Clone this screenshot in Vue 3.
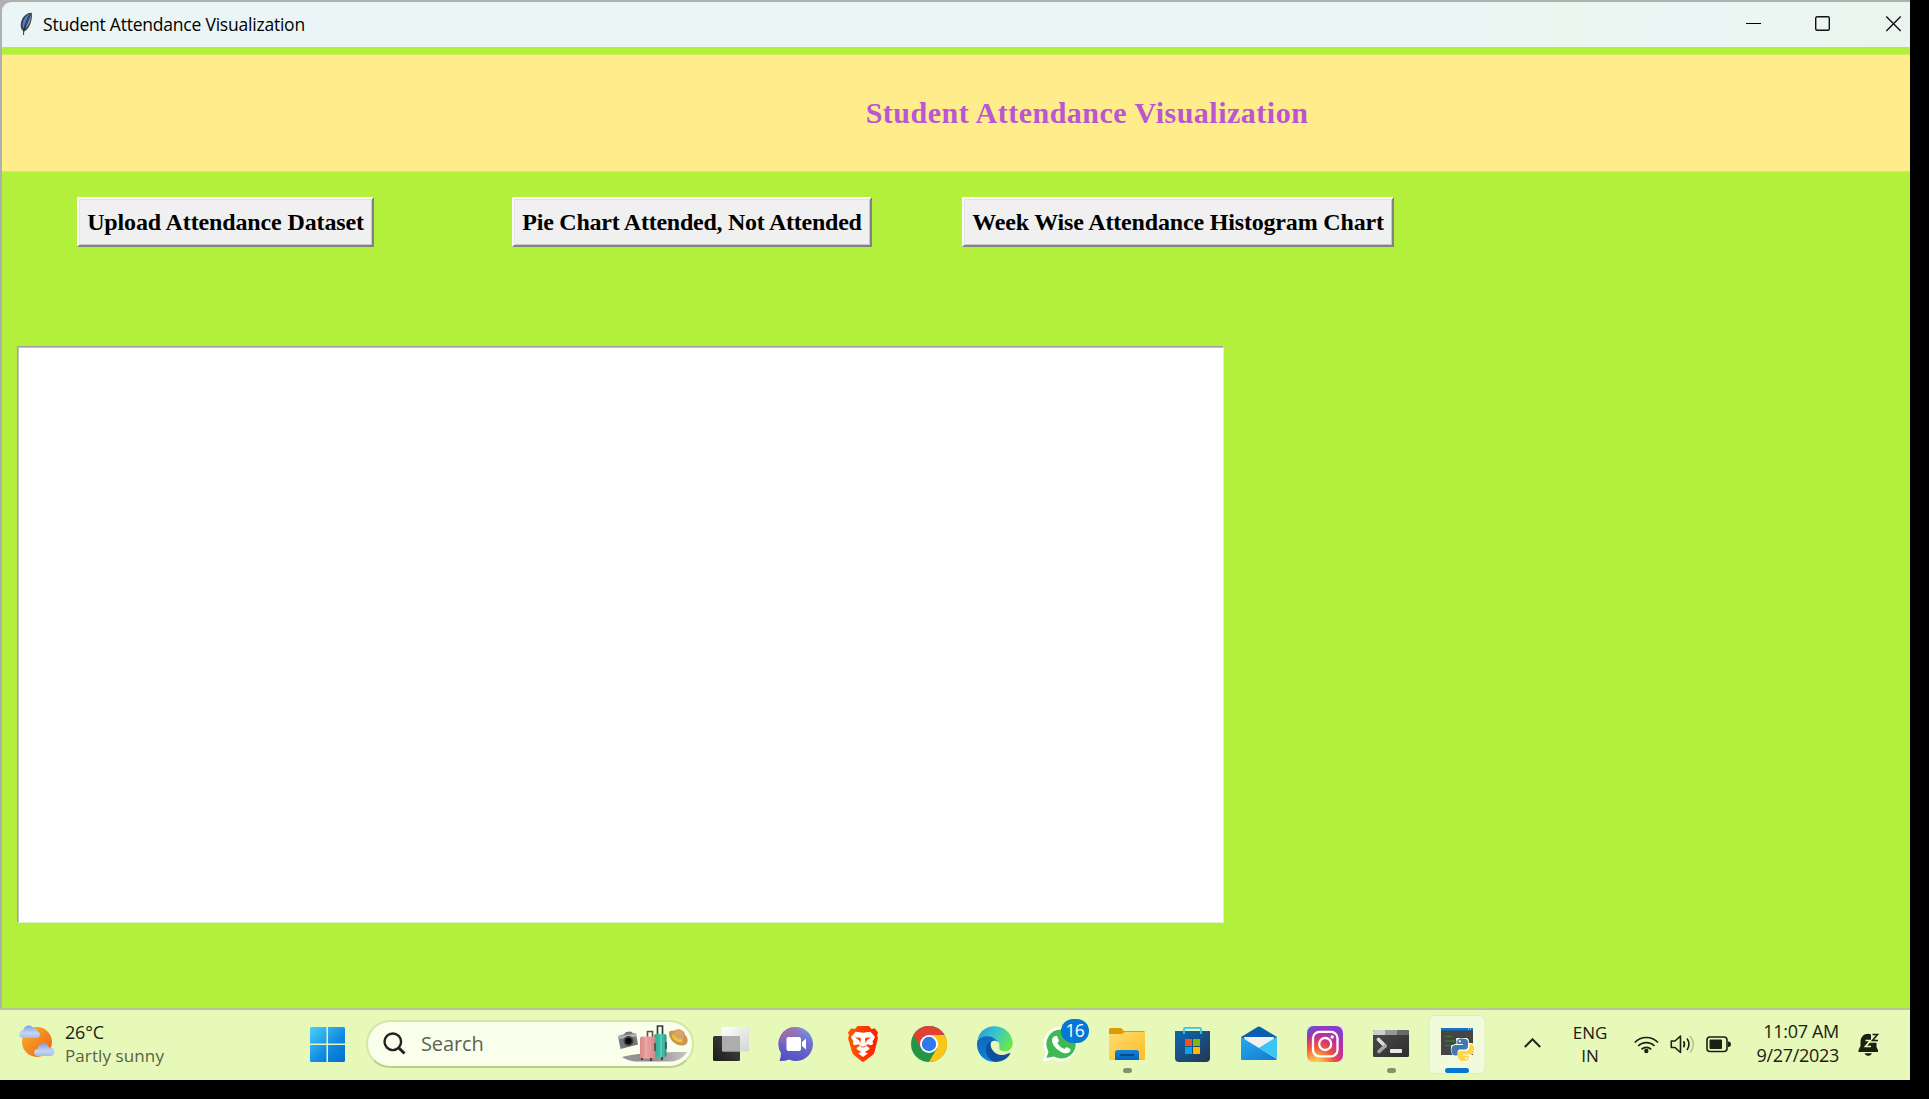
<script setup>
const actions = [
  { label: 'Upload Attendance Dataset', cls: 'upload' },
  { label: 'Pie Chart Attended, Not Attended', cls: 'pie' },
  { label: 'Week Wise Attendance Histogram Chart', cls: 'week' },
]
</script>

<template>
  <div class="screen">
    <div class="desktop">
      <div class="window">
        <header class="titlebar">
          <svg class="feather" width="14" height="24" viewBox="0 0 14 24">
            <path d="M4.6 23.4 L4.2 19 C1 17 .8 11 4 5.6 C6.500 2 10 .5 12.600 .8 C13.600 4 12.600 11 9.500 15.500 C8 17.700 6.500 19 5 19.300z" fill="#39424f" />
            <path d="M4.300 16.500 C2.800 13 4 8 7 4.500 C8.500 2.800 10 2 11 2.200 C9.500 7 7 12 4.300 16.500z" fill="#4585cf" />
            <path d="M11.800 2.500 C12.300 7 10.500 13 6.500 16.500 C8 12 10.500 8 11.800 2.500z" fill="#8d9aa6" />
            <path d="M4.600 23 C4.400 17 7 9 10.500 3" stroke="#1c2b40" stroke-width=".9" fill="none" />
          </svg>
          <span class="caption">Student Attendance Visualization</span>
          <svg class="controls" width="156" height="16" viewBox="0 0 156 16" fill="none" stroke="#111" stroke-width="1.400">
            <path d="M0 7.500H15" stroke-width="1" stroke="#000" />
            <rect x="69.700" y=".7" width="13.600" height="13.600" rx="1.500" />
            <path d="M140.300 .5 L154.700 14.900 M154.700 .5 L140.300 14.900" />
          </svg>
        </header>
        <main class="client">
          <h1 class="banner"><span>Student Attendance Visualization</span></h1>
          <div class="actions">
            <button v-for="a in actions" :key="a.cls" :class="['tk', a.cls]"><span>{{ a.label }}</span></button>
          </div>
          <div class="output"></div>
        </main>
      </div>

      <footer class="taskbar">
        <div class="weather">
          <svg width="36" height="34" viewBox="0 0 36 34">
            <defs>
              <linearGradient id="sun" x1="0" y1="0" x2="1" y2="1"><stop offset="0" stop-color="#f9b52c" /><stop offset="1" stop-color="#ee5f11" /></linearGradient>
              <linearGradient id="cloud" x1="0" y1="0" x2="0" y2="1"><stop offset="0" stop-color="#7e9fe0" /><stop offset=".6" stop-color="#c5d6f4" /><stop offset="1" stop-color="#a3bcea" /></linearGradient>
            </defs>
            <circle cx="18" cy="18" r="15" fill="url(#sun)" />
            <path d="M4 14 C-1 14 -1 6.500 4 6.500 C5 1 12 -.5 15 4.500 C18 4.500 19 6 18.500 7.500 C22 8 21.500 14 17.500 14z" fill="url(#cloud)" />
            <path d="M18.500 32 C14 32 14 25 18.500 25 C20 18 28 17.500 30 23.500 C36.500 22.500 37.500 32 31 32z" fill="url(#cloud)" />
          </svg>
          <div class="lines">
            <span class="temp">26°C</span>
            <span class="cond">Partly sunny</span>
          </div>
        </div>

        <svg class="start" width="35" height="35" viewBox="0 0 35 35">
          <defs>
            <linearGradient id="win" gradientUnits="userSpaceOnUse" x1="0" y1="0" x2="33" y2="35"><stop offset="0" stop-color="#4bd0fb" /><stop offset=".6" stop-color="#118ae0" /><stop offset="1" stop-color="#0070d0" /></linearGradient>
          </defs>
          <path fill="url(#win)" d="M1.500 0H16.500V16.500H0V1.500Q0 0 1.500 0z M18 0H33.500Q35 0 35 1.500V16.500H18z M0 18H16.500V35H1.500Q0 35 0 33.500z M18 18H35V33.500Q35 35 33.500 35H18z" />
        </svg>

        <div class="search">
          <svg width="24" height="24" viewBox="0 0 24 24" fill="none" stroke="#222" stroke-width="2.400">
            <circle cx="9.800" cy="9.800" r="8.300" /><path d="M15.700 15.700 L21.500 21.500" stroke-width="3" />
          </svg>
          <span>Search</span>
          <svg class="travel" width="71" height="38" viewBox="0 0 71 38">
            <defs>
              <linearGradient id="pink" x1="0" y1="0" x2="1" y2="0"><stop offset="0" stop-color="#d98786" /><stop offset=".4" stop-color="#efaaa6" /><stop offset="1" stop-color="#d48482" /></linearGradient>
              <linearGradient id="teal" x1="0" y1="0" x2="1" y2="0"><stop offset="0" stop-color="#2a9f8d" /><stop offset=".6" stop-color="#55d2ba" /><stop offset="1" stop-color="#26917f" /></linearGradient>
              <linearGradient id="ground" x1="0" y1="0" x2="1" y2="0"><stop offset="0" stop-color="#9a9499" /><stop offset=".45" stop-color="#8e898e" /><stop offset="1" stop-color="#cac6c8" /></linearGradient>
            </defs>
            <path d="M5 32 C18 28 50 27 70 27 C66 33 60 36.500 54 36.500 H18 C12 36 8 34 5 32z" fill="url(#ground)" />
            <path d="M1 11 L7 9.300 L9 7 L14 6.500 L16 8.300 L19 8.500 L21 19.500 L3.500 24z" fill="#77777a" />
            <path d="M1 11 L19 8.500 L19.500 11.500 L1.600 14z" fill="#b1b1b2" />
            <circle cx="11.500" cy="16" r="5" fill="#444" /><circle cx="11.500" cy="16" r="3.200" fill="#090909" />
            <path d="M40.500 10V1H45.500V10" fill="none" stroke="#37373c" stroke-width="1.700" />
            <path d="M30.500 12V6.500H35.500V12" fill="none" stroke="#68464a" stroke-width="1.600" />
            <rect x="37" y="9" width="12.500" height="23" rx="2" fill="url(#teal)" />
            <path d="M42 10V31M45.500 10V31" stroke="#36ad97" stroke-width=".7" />
            <rect x="23" y="11.500" width="15.500" height="22" rx="2" fill="url(#pink)" />
            <path d="M27 13V32M31 13V32M35 13V32" stroke="#da9090" stroke-width=".8" />
            <path d="M38 18V26M49 17V24" stroke="#34464c" stroke-width="1.500" />
            <path d="M25 33v2M34 33v3M45 32v3" stroke="#3a373d" stroke-width="1.800" />
            <path d="M52 9 C51 5 56 6 58 5.500 C61 3 68 5 68 10 C72 13 72 21 65 20.500 C58 20.500 52 14 52 9z" fill="#c99556" />
            <path d="M58 5.500 C61 3 68 6 67 11 L65.500 15 C61 15.500 57 13 56 9z" fill="#d8a467" />
            <path d="M56 9 C57.500 13 62 15 66 14 L65 17.500 C59 17 55 14 55 10z" fill="#f3c72f" />
          </svg>
        </div>

        <nav class="apps">
          <svg class="app" viewBox="0 0 66 70">
            <defs>
              <linearGradient id="tvd" x1="1" y1="0" x2="0" y2="1"><stop offset="0" stop-color="#4b4a48" /><stop offset="1" stop-color="#1c1b1a" /></linearGradient>
              <linearGradient id="tvl" x1="0" y1="0" x2="1" y2="1"><stop offset="0" stop-color="#fff" /><stop offset="1" stop-color="#d4d4d4" /></linearGradient>
            </defs>
            <rect x="15" y="26" width="27" height="25" rx="1.500" fill="url(#tvd)" />
            <rect x="24" y="17" width="27" height="24.500" rx="1.500" fill="url(#tvl)" />
            <path d="M24 26H42V41H25Q24 41 24 40z" fill="#adadad" />
          </svg>

          <svg class="app" viewBox="0 0 66 70">
            <defs><linearGradient id="chat" x1=".8" y1="0" x2=".4" y2="1"><stop offset="0" stop-color="#78a0f0" /><stop offset=".35" stop-color="#7470cb" /><stop offset="1" stop-color="#5451c7" /></linearGradient>
              <radialGradient id="chat2" cx=".25" cy=".1" r=".55"><stop offset="0" stop-color="#a66ba8" /><stop offset="1" stop-color="#a66ba8" stop-opacity="0" /></radialGradient></defs>
            <path d="M32 17 A17 17 0 1 1 25 49.500 Q20 51.500 15.500 51 Q17 47 17 43 A17 17 0 0 1 32 17z" fill="url(#chat)" />
            <path d="M32 17 A17 17 0 1 1 25 49.500 Q20 51.500 15.500 51 Q17 47 17 43 A17 17 0 0 1 32 17z" fill="url(#chat2)" />
            <rect x="22.500" y="27" width="14.500" height="14" rx="2" fill="#fff" /><path d="M38 32 L42 28.500V39.500L38 36z" fill="#fff" />
          </svg>

          <svg class="app" viewBox="0 0 66 70">
            <defs><linearGradient id="brv" x1="0" y1="0" x2="1" y2="0"><stop offset="0" stop-color="#ff5a00" /><stop offset="1" stop-color="#ff1e00" /></linearGradient></defs>
            <path d="M25 19 L27.500 16H39L41.500 19 L45 18.500 L48 22.500 L47 25.500 L48 28 L44.500 42 Q44 44 42 45.500 L34.500 51.200 Q33 52.500 31.500 51.200 L24.500 45.500 Q22.500 44 22 42 L18 28 L19 25.500 L18 22.500 L21 18.500z" fill="url(#brv)" />
            <path d="M33 22.800 L40.500 21.800 L45 27 L42.500 31.500 Q44 34.500 41 35.300 L37.500 34.300 L36 35.800 L39.500 38 L39 39.500 L34 42.500 Q33 43.300 32 42.500 L27 39.500 L26.500 38 L30 35.800 L28.500 34.300 L25 35.300 Q22 34.500 23.500 31.500 L21 27 L25.500 21.800z" fill="#fff" />
            <path d="M25 27.300 L30.500 27.800 L31 29.200 L30.300 33.300 L29.200 30.600z M41 27.300 L35.500 27.800 L35 29.200 L35.700 33.300 L36.800 30.600z" fill="#ff4200" />
            <path d="M30.500 36.300 L33 37.200 L35.500 36.300" fill="none" stroke="#ff4200" stroke-width=".9" />
            <path d="M28 43.300 L33 41.500 L38 43.300 L33 47z" fill="#fff" />
          </svg>

          <svg class="app" viewBox="0 0 66 70">
            <circle cx="33" cy="34" r="18" fill="#249447" />
            <path d="M17.400 25 A18 18 0 0 1 48.600 25 H33 L25.200 38.500z" fill="#df4134" />
            <path d="M48.600 25 A18 18 0 0 1 33 52 L40.800 38.500 L33 25z" fill="#fcc518" />
            <circle cx="33" cy="34" r="9" fill="#fff" /><circle cx="33" cy="34" r="7.200" fill="#2d79ed" />
          </svg>

          <svg class="app" viewBox="0 0 66 70">
            <defs>
              <linearGradient id="edt" x1="0" y1="0" x2="1" y2=".5"><stop offset="0" stop-color="#2398d9" /><stop offset=".5" stop-color="#35c4d0" /><stop offset="1" stop-color="#67e650" /></linearGradient>
              <linearGradient id="edb" x1="0" y1="0" x2=".3" y2="1"><stop offset="0" stop-color="#1364b4" /><stop offset="1" stop-color="#0a86de" /></linearGradient>
            </defs>
            <path d="M15.500 30 C19 11 47 12 50.500 31 C52 39 46 42 41 41.500 C37 41 35.500 39.500 37 37 C39 33 34 27 27 27 C21 26 17 28 15.500 30z" fill="url(#edt)" />
            <path d="M15.300 31 C17 27 25 24.500 31 27.500 C34 29 36 31 36.500 32 C32 29 28 31.500 28 36 C28 43 34 48 41 47 C37 53 28 53 22 48.500 C17 45 14 38 15.300 31z" fill="url(#edb)" />
            <path d="M29 31.500 C27 37 32 45.500 41 45 C45 44.500 47 42.500 48.400 43 C47 48 40 52 33.500 52 C25 50 22 40 25 34.500 C26 32.500 28 31 29 31.500z" fill="#104f9c" />
            <path d="M37 37 C35.500 41 42 43.500 47 41" fill="none" stroke="#e7f9ba" stroke-width="1.200" />
          </svg>

          <svg class="app" viewBox="0 0 66 70">
            <path d="M33 17 A17 17 0 1 1 25 49.500 L15 51.500 L17.500 42 A17 17 0 0 1 33 17z" fill="#fff" />
            <path d="M33 19.500 A14.500 14.500 0 1 1 26 46.500 L18.500 48 L20.500 41.500 A14.500 14.500 0 0 1 33 19.500z" fill="#3fba50" />
            <path d="M27 26 L29 26 L31 30.500 L29.500 33 C31 36 33.500 38 36.500 39 L38.500 37 L42.500 39 C43 43 38 44 35.500 43 C30 41 25.500 36.500 24 31.500 C23.500 29 25 26.500 27 26z" fill="#fff" />
            <rect x="33" y="9" width="28" height="24" rx="12" fill="#0478d4" />
            <text x="46.800" y="27" text-anchor="middle" class="count">16</text>
          </svg>

          <svg class="app" viewBox="0 0 66 70">
            <defs><linearGradient id="fld" x1="0" y1="0" x2="1" y2="1"><stop offset="0" stop-color="#ffdd70" /><stop offset="1" stop-color="#fdbc25" /></linearGradient>
              <linearGradient id="fldb" x1="0" y1="0" x2="0" y2="1"><stop offset="0" stop-color="#1483d8" /><stop offset="1" stop-color="#0363b3" /></linearGradient></defs>
            <path d="M15 19.500 Q15 18 16.500 18H27L30 21H49.500Q51 21 51 22.500V32H15z" fill="#dd9c04" />
            <path d="M15 24H27.500L31 22H51V49Q51 50 50 50H16Q15 50 15 49z" fill="url(#fld)" />
            <path d="M21 50V42.500Q21 40 23.500 40H42.500Q45 40 45 42.500V50z" fill="url(#fldb)" />
            <path d="M25.500 45H40" stroke="#053f72" stroke-width="1.500" />
            <rect x="29" y="58" width="9" height="5" rx="2.500" fill="#84926c" />
          </svg>

          <svg class="app" viewBox="0 0 66 70">
            <defs><linearGradient id="str" x1="0" y1="0" x2="1" y2="1"><stop offset="0" stop-color="#0969b6" /><stop offset="1" stop-color="#263553" /></linearGradient></defs>
            <path d="M15 21H50V48Q50 52 46 52H19Q15 52 15 48z" fill="url(#str)" />
            <path d="M24 24V19Q24 17.800 25.200 17.800H39.800Q41 17.800 41 19V24" fill="none" stroke="#36c4f3" stroke-width="1.800" />
            <path d="M25 29h7v7h-7z" fill="#f25022" /><path d="M33 29h7v7h-7z" fill="#7fba00" /><path d="M25 37h7v7h-7z" fill="#00a4ef" /><path d="M33 37h7v7h-7z" fill="#ffb900" />
          </svg>

          <svg class="app" viewBox="0 0 66 70">
            <defs><linearGradient id="ml" x1="0" y1="0" x2="1" y2="1"><stop offset="0" stop-color="#28aaea" /><stop offset="1" stop-color="#1179d5" /></linearGradient></defs>
            <path d="M15 27 L31.500 17 Q33 16 34.500 17 L51 27 L46 36H20z" fill="#0a5eaf" />
            <path d="M18 27H48L46 37H20z" fill="#f1f1f2" />
            <path d="M51 27V48L33 38z" fill="#3bc5f4" />
            <path d="M15 27 L51 49 Q50.500 50 49 50H16.500Q15 50 15 48.500z" fill="url(#ml)" />
            <path d="M33 38 L51 27V48.500z" fill="#3bc5f4" />
          </svg>

          <svg class="app" viewBox="0 0 66 70">
            <defs>
              <radialGradient id="ig" cx=".25" cy="1.050" r="1.100"><stop offset="0" stop-color="#ffdc58" /><stop offset=".18" stop-color="#fcaf45" /><stop offset=".45" stop-color="#f2503c" /><stop offset=".7" stop-color="#c52e94" /><stop offset="1" stop-color="#8440cc" /></radialGradient>
              <radialGradient id="ig2" cx="0" cy="0" r=".45"><stop offset="0" stop-color="#4468dc" /><stop offset="1" stop-color="#7838c5" stop-opacity="0" /></radialGradient>
            </defs>
            <rect x="15" y="16" width="36" height="36" fill="#eedfe3" />
            <rect x="15" y="16" width="36" height="36" rx="7" fill="url(#ig)" /><rect x="15" y="16" width="36" height="36" rx="7" fill="url(#ig2)" />
            <g fill="none" stroke="#fff" stroke-width="2.300"><rect x="21" y="21.800" width="24.500" height="24.500" rx="6.500" /><circle cx="33.200" cy="34" r="6" /></g>
            <circle cx="40.200" cy="27" r="1.700" fill="#fff" />
          </svg>

          <svg class="app" viewBox="0 0 66 70">
            <defs><linearGradient id="trm" x1="0" y1="0" x2="1" y2="1"><stop offset="0" stop-color="#4c4c4c" /><stop offset="1" stop-color="#2d2d2d" /></linearGradient></defs>
            <rect x="15" y="20" width="36" height="27" rx="1.500" fill="url(#trm)" />
            <path d="M16.500 20H27V25H15V21.500Q15 20 16.500 20z" fill="#cdcdcd" /><path d="M27 20H39V25H27z" fill="#989898" /><path d="M39 20H49.500Q51 20 51 21.500V25H39z" fill="#686868" />
            <path d="M20.500 29.500 L27 36" stroke="#ddd" stroke-width="3.600" stroke-linecap="round" /><path d="M27 36 L21 41.500" stroke="#a6a6a6" stroke-width="3.600" stroke-linecap="round" />
            <rect x="32" y="39" width="12" height="4" rx=".8" fill="#e8e8e8" />
            <rect x="29" y="58" width="9" height="5" rx="2.500" fill="#84926c" />
          </svg>

          <svg class="app" viewBox="0 0 66 70">
            <rect x="5" y="5.500" width="56" height="58" rx="5.500" fill="#f1fbdb" stroke="#dbeebb" stroke-width="1" />
            <path d="M17 18H49V45H17z" fill="#454545" /><path d="M17 18H49V20.500H17z" fill="#0878d2" />
            <path d="M44 19H48" stroke="#8ac5ee" stroke-width="1.500" stroke-dasharray="1 1" />
            <path d="M21 26.500H28.500M21 31H31M21 35.500H27" stroke="#34772f" stroke-width="1.300" />
            <g stroke="#fff" stroke-width="1.800" stroke-linejoin="round" fill="#fff">
              <path d="M33 29H42Q44 29 44 32V34H48Q50.500 35 50 42L45 45 44 50Q40 51.500 35 49.500L34 45.500H30Q27 42 28 36L33.500 34z" />
            </g>
            <path d="M38 28.500 C34 28.500 33.200 30 33.200 32V34H39V35H31.500C28 35 27.500 38 27.500 40 C27.500 44 29.500 45.500 31.500 45.500H33.500V42.500C33.500 40 35 39.500 37 39.500H41C43 39.500 44 38 44 36V32C44 29.500 42 28.500 38 28.500z" fill="#3f79ae" />
            <path d="M40 51 C44 51 44.800 49.500 44.800 47.500V45.500H39V44.500H46.500C49.500 44.500 50.300 42 50.300 39.500 C50.300 36 49 34.200 46.500 34.200H45.300V37C45.300 39.500 43.500 40.800 41.500 40.800H37C35 40.800 34 42 34 44V47.500C34 50 36 51 40 51z" fill="#ffd744" />
            <circle cx="35.800" cy="31.300" r="1.100" fill="#fff" /><circle cx="42" cy="48.300" r="1.100" fill="#fff" />
            <rect x="21" y="58" width="24" height="5" rx="2.500" fill="#0478d4" />
          </svg>
        </nav>

        <div class="tray">
          <svg class="chevron" width="17" height="10" viewBox="0 0 17 10" fill="none" stroke="#1f2517" stroke-width="2"><path d="M.8 9 L8.500 1.300 L16.200 9" /></svg>
          <div class="lang"><span>ENG</span><span>IN</span></div>
          <svg class="status" width="98" height="20" viewBox="0 0 98 20" fill="none" stroke="#1a2013" stroke-width="1.600">
            <path d="M.7 8.500 A16 16 0 0 1 24 8.500 M4.200 12 A11.500 11.500 0 0 1 20.500 12 M7.500 15.300 A7 7 0 0 1 17.200 15.300" />
            <circle cx="12.300" cy="17" r="2.200" fill="#1a2013" stroke="none" />
            <path d="M37.300 7H41L46.500 2V18.500L41 13.500H37.300z" stroke-linejoin="round" />
            <path d="M49.500 7.200 Q51.500 10.200 49.500 13.200 M53 4.500 Q57 10.200 53 16" />
            <path d="M56 2 Q63 10.200 56 18.500" stroke="#b4c492" />
            <rect x="73" y="3" width="20" height="14.500" rx="3" /><rect x="75.500" y="5.500" width="12.500" height="9.500" rx="1" fill="#1a2013" stroke="none" />
            <path d="M94 7.500H95Q97 8 97 10.200T95 13H94z" fill="#1a2013" stroke="none" />
          </svg>
          <div class="clock"><span class="time">11:07 AM</span><span class="date">9/27/2023</span></div>
          <svg class="bell" width="22" height="24" viewBox="0 0 22 24">
            <path d="M2.500 13V9 C2.500 4 6 .8 10 .8 Q12 .8 13 1.500V8H18.500V14L20 17V19H.5V17z" fill="#1a2013" />
            <path d="M6.500 20.300H14 Q13 23 10.200 23 T6.500 20.300z" fill="#1a2013" />
            <path d="M14 1.500H20L14.500 8H20.500" fill="none" stroke="#e6f8ba" stroke-width="3.400" />
            <path d="M7.500 7.500H12.500L7.500 13.500H13" fill="none" stroke="#e6f8ba" stroke-width="1.700" />
            <path d="M14.500 1.500H19.500L14.500 7.500H20" fill="none" stroke="#1a2013" stroke-width="1.600" />
          </svg>
        </div>
      </footer>
    </div>
  </div>
</template>

<style>
body { margin: 0; background: #000; }
</style>

<style scoped>
.screen { width: 1929px; height: 1099px; background: #000; overflow: hidden; }
.desktop { width: 1910px; height: 1080px; display: flex; flex-direction: column; overflow: hidden; background: #b0b0b0; font-family: "Open Sans", "Noto Sans", sans-serif; }
.window { box-sizing: border-box; height: 1008px; padding: 2px 0 0 2px; flex: none; }
.titlebar { height: 45px; box-sizing: border-box; display: flex; align-items: center; background: linear-gradient(90deg, #ebf5f5 0 76%, #ebf5f0 82%, #ebf5f4 88%, #ebf5ef); border-radius: 9px 0 0 0; padding: 0 8px 0 17px; }
.feather { margin-top: -1px; flex: none; }
.caption { margin: -2px 0 0 10px; font-size: 17.500px; line-height: 24px; color: #000; letter-spacing: -.22px; white-space: nowrap; }
.controls { margin-left: auto; margin-top: -1px; flex: none; }
.client { height: 961px; background: #b3f03b; padding-top: 7px; box-sizing: border-box; }
.banner { margin: 0; height: 118px; box-sizing: border-box; border-top: 1px solid #cfea54; border-bottom: 1px solid #d3e667; background: #ffec8b; display: flex; justify-content: center; padding-left: 262px; font: bold 30px/36px "Liberation Serif", serif; color: #ba55d3; }
.banner span { margin-top: 40px; white-space: nowrap; letter-spacing: .5px; }
.actions { display: flex; height: 50px; margin: 25px 0 0 75px; }
.tk { box-sizing: border-box; height: 50px; padding: 0; flex: none; border: 2px solid; border-color: #fbfbfb #828282 #828282 #fbfbfb; background: #f0f0f0; box-shadow: inset 1px 1px #e3e3e3, inset -1px -1px #c8c8c8; font: bold 24px/28px "Liberation Serif", serif; color: #000; white-space: nowrap; display: flex; justify-content: center; align-items: center; }
.upload { width: 297px; letter-spacing: -.13px; }
.pie { width: 360px; margin-left: 138px; letter-spacing: -.25px; }
.week { width: 432px; margin-left: 90px; letter-spacing: -.17px; }
.output { box-sizing: border-box; width: 1207px; height: 577px; margin: 99px 0 0 15px; background: #fff; border: 1px solid; border-color: #a0a0a0 #e0f4c0 #e0f4c0 #a0a0a0; box-shadow: inset 1px 1px #c4c4c4; }
.taskbar { height: 72px; flex: none; box-sizing: border-box; border-top: 2px solid #b7c49b; background: #e6f9b8; display: flex; align-items: flex-start; white-space: nowrap; }
.weather { display: flex; width: 291px; padding: 14px 0 0 19px; }
.lines { display: flex; flex-direction: column; margin: -4px 0 0 10px; font-size: 17px; line-height: 24px; }
.temp { color: #1a1f13; font-size: 18px; letter-spacing: -.2px; }
.cond { color: #56614a; letter-spacing: .1px; }
.start { margin-top: 17px; flex: none; }
.search { box-sizing: border-box; width: 328px; height: 48px; margin: 10px 4px 0 21px; border: 2px solid #d1e9a3; border-bottom-color: #b9d18d; border-radius: 24px; background: #f9ffeb; display: flex; align-items: center; padding-left: 15px; flex: none; }
.search span { margin: -2px 0 0 14px; font-size: 20px; color: #5d6354; letter-spacing: -.1px; }
.search .travel { margin-left: auto; margin-right: 4px; }
.apps { display: flex; }
.app { width: 66px; height: 70px; flex: none; }
.count { font: 17.500px "Open Sans", sans-serif; letter-spacing: -.8px; fill: #fff; }
.tray { display: flex; color: #1a2013; font-size: 17px; line-height: 24px; }
.chevron { margin: 28px 0 0 34px; }
.lang { width: 60px; margin: 11px 0 0 19px; display: flex; flex-direction: column; align-items: center; line-height: 23px; }
.status { margin: 24px 0 0 14px; }
.clock { width: 107px; margin-top: 9px; display: flex; flex-direction: column; align-items: flex-end; font-size: 18px; letter-spacing: -.3px; }
.bell { margin: 23px 0 0 19px; }
</style>
